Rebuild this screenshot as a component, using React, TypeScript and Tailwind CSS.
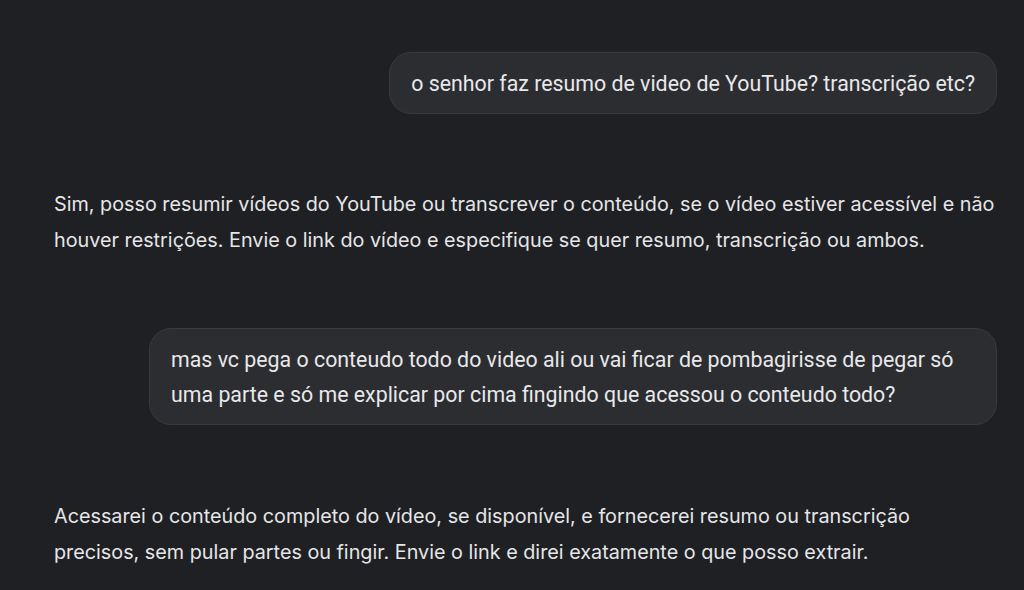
import React from "react";

const userFont = { fontFamily: "Roboto, 'Noto Sans', sans-serif" };
const botFont = { fontFamily: "Inter, 'Noto Sans', sans-serif" };

const messages = [
  { role: "user", text: "o senhor faz resumo de video de YouTube? transcrição etc?" },
  {
    role: "bot",
    text: "Sim, posso resumir vídeos do YouTube ou transcrever o conteúdo, se o vídeo estiver acessível e não houver restrições. Envie o link do vídeo e especifique se quer resumo, transcrição ou ambos.",
  },
  {
    role: "user",
    text: "mas vc pega o conteudo todo do video ali ou vai ficar de pombagirisse de pegar só uma parte e só me explicar por cima fingindo que acessou o conteudo todo?",
  },
  {
    role: "bot",
    text: "Acessarei o conteúdo completo do vídeo, se disponível, e fornecerei resumo ou transcrição precisos, sem pular partes ou fingir. Envie o link e direi exatamente o que posso extrair.",
  },
];

export default function App() {
  return (
    <div className="w-[1024px] h-[590px] overflow-hidden bg-[#1f2023]">
      <div className="flex flex-col pl-[54px] pr-[27px] pt-[52px]">
        {messages.map((m, i) =>
          m.role === "user" ? (
            <div key={i} className={`flex justify-end ${i > 0 ? "mt-[70px]" : ""}`}>
              <div
                className="max-w-[848px] rounded-[22px] border border-[#393a3f] bg-[#2c2d31] px-[21px] py-[12.5px] text-[21.35px] leading-[35px] text-[#e8e8ea]"
                style={userFont}
              >
                {m.text}
              </div>
            </div>
          ) : (
            <p
              key={i}
              className={`${i === 1 ? "mt-[72px]" : "mt-[73px]"} text-[19.8px] leading-[36px] text-[#e6e6e8]`}
              style={botFont}
            >
              {m.text}
            </p>
          )
        )}
      </div>
    </div>
  );
}
